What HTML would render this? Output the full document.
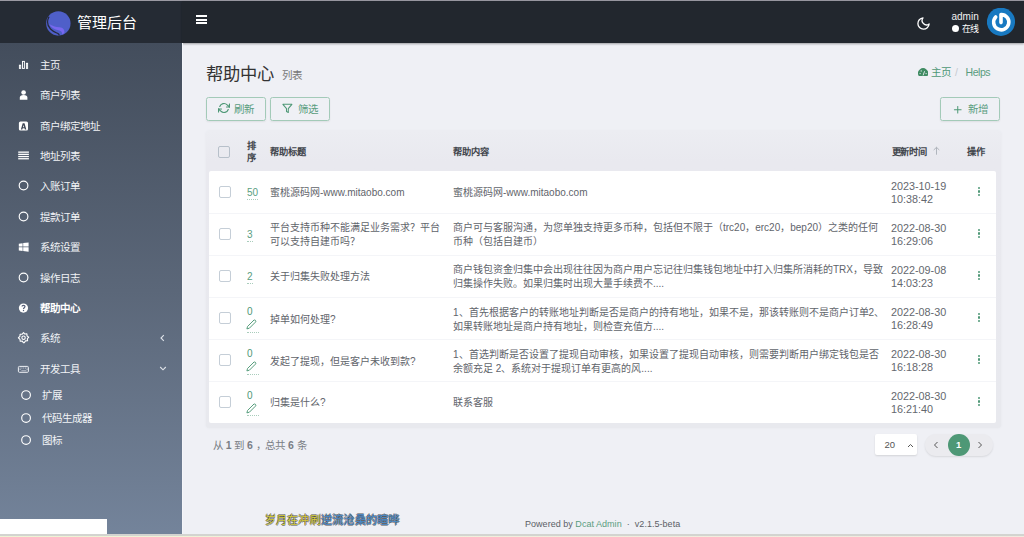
<!DOCTYPE html>
<html lang="zh-CN"><head><meta charset="utf-8">
<style>
*{box-sizing:border-box;margin:0;padding:0}
html,body{width:1024px;height:537px;overflow:hidden}
body{font-family:"Liberation Sans",sans-serif;font-size:10.5px;color:#414750;background:#eff0f5;position:relative}
.abs{position:absolute}
#topline{left:0;top:0;width:1024px;height:1px;background:#9b9aa3}
#header{left:182px;top:1px;width:842px;height:41.5px;background:#22272e;box-shadow:0 1px 2px rgba(0,0,0,.35)}
#brand{left:0;top:1px;width:182px;height:41.5px;background:#252b34}
#sidebar{left:0;top:42.5px;width:181.5px;height:495px;background:linear-gradient(180deg,#434d5c 0%,#5b6779 50%,#74849b 100%)}
#shadow{left:182px;top:42.5px;width:1.2px;height:492px;background:#f4f5f9}
.logo-text{left:77.3px;top:13.8px;font-size:15px;color:#fff;line-height:17px;letter-spacing:-.15px}
.menu{position:absolute;left:0;width:182px;height:20px;line-height:20px;color:#f1f3f6;font-size:10.5px}
.menu .t{position:absolute;left:40px;top:0}
.menu .ic{position:absolute;left:14px;top:0;width:20px;height:20px}
.sub .t{left:42px}
.h1{left:206.3px;top:63.3px;font-size:17.3px;color:#333;line-height:22px;letter-spacing:-.2px}
.h1s{left:282px;top:68px;font-size:10.5px;color:#777;line-height:14px;letter-spacing:-.3px}
.btn{position:absolute;height:24px;border:1px solid #a3cab8;border-radius:2.5px;color:#5a9d7f;font-size:10.5px;line-height:22px;box-shadow:0 1px 2px rgba(0,0,0,.07)}
.btn span{letter-spacing:-.4px}
.crumb{top:66px;line-height:12px;font-size:10.5px;color:#4e9876}
#thead{left:205.5px;top:130.5px;width:795px;height:297px;background:linear-gradient(180deg,#ecedf2 0,#e9e9ef 30px,#e8e9ee 100%);border-radius:3px;box-shadow:0 0 1.5px rgba(225,226,232,.9)}
#tbody{left:209px;top:171px;width:787px;height:252px;background:#fff;border-radius:2px}
.cb{position:absolute;width:12px;height:12px;border:1px solid #c5ced7;border-radius:2px;background:#fff}
.th{position:absolute;font-weight:bold;color:#41454c;font-size:9.25px;line-height:12.2px;letter-spacing:-.1px}
.td{position:absolute;line-height:14px;font-size:10px;color:#5f646b}
.date{font-size:10.8px;line-height:13.5px;color:#63676e}
.num{position:absolute;color:#5a9e80;font-size:10px;line-height:11px;padding-bottom:1px;border-bottom:1px dotted #a9cdbc}
.kebab{position:absolute;left:978px;width:3px;height:9px}
.kebab i{display:block;width:2.3px;height:2.3px;border-radius:50%;background:#4f9877;margin-bottom:1px}
</style></head><body>
<div id="topline" class="abs"></div>
<div id="brand" class="abs"></div>
<div id="header" class="abs"></div>
<div id="sidebar" class="abs"></div>
<div id="shadow" class="abs"></div>

<!-- logo -->
<svg class="abs" style="left:46px;top:10.5px" width="25" height="25" viewBox="0 0 25 25">
  <defs><clipPath id="lc"><circle cx="12.35" cy="12.45" r="12.2"/></clipPath></defs>
  <circle cx="12.35" cy="12.45" r="12.2" fill="#4f5fc9"/>
  <g clip-path="url(#lc)">
  <path d="M3.2 13 C6 15.2 9.5 15.8 13.5 16.3 C17 16.8 18.8 18.5 18.4 22 L16.2 23.5 C16.4 20.8 14.8 19.6 12.5 19.2 C8.5 18.4 5.2 16.8 3.2 13Z" fill="#7868ef"/>
  <path d="M3 5.6 C1 9.5 1.2 14.5 4.5 18 C7 20.6 10 21.6 12 22.6 C13.2 23.3 13.4 24.3 13 25.2" fill="none" stroke="#252a3c" stroke-width="1.25"/>
  </g>
</svg>
<div class="abs logo-text">管理后台</div>
<!-- hamburger -->
<div class="abs" style="left:196px;top:15px;width:11px;height:9px">
  <div style="height:2px;background:#fff;margin-bottom:1.5px"></div>
  <div style="height:2px;background:#fff;margin-bottom:1.5px"></div>
  <div style="height:2px;background:#fff"></div>
</div>
<!-- moon -->
<svg class="abs" style="left:916px;top:15.5px" width="15" height="15" viewBox="0 0 24 24" fill="none" stroke="#fff" stroke-width="2.1" stroke-linecap="round" stroke-linejoin="round"><path d="M21 12.79A9 9 0 1 1 11.21 3 7 7 0 0 0 21 12.79z"/></svg>
<div class="abs" style="left:951.5px;top:11px;font-size:10px;color:#f2f2f2;line-height:12px">admin</div>
<div class="abs" style="left:952.2px;top:25.2px;width:7.2px;height:7.2px;border-radius:50%;background:#fff"></div>
<div class="abs" style="left:961.8px;top:23.5px;font-size:9px;color:#fff;line-height:11px;letter-spacing:-.3px">在线</div>
<svg class="abs" style="left:987px;top:8.2px" width="28" height="28" viewBox="0 0 28 28">
  <circle cx="13.95" cy="13.8" r="14.1" fill="#1879c1"/>
  <path d="M8.7 9 A7.6 7.6 0 1 0 14 6.6 L14 14.6" fill="none" stroke="#fff" stroke-width="3.6" stroke-linecap="round" stroke-linejoin="round"/>
</svg>

<!-- sidebar menu -->
<div class="menu" style="top:54.7px"><svg class="ic" viewBox="0 0 20 20"><g fill="none" stroke="#fff" stroke-width=".95"><rect x="5.4" y="10.2" width="1.3" height="3.2"/><rect x="8.5" y="6.4" width="1.9" height="7"/><rect x="12.4" y="8.3" width="1.2" height="5.1"/></g></svg><span class="t">主页</span></div>
<div class="menu" style="top:85.10000000000001px"><svg class="ic" viewBox="0 0 20 20"><circle cx="9.6" cy="7.5" r="2.3" fill="#fff"/><path d="M5.8 14.7 L5.8 12.6 Q5.8 9.9 9.6 9.9 Q13.4 9.9 13.4 12.6 L13.4 14.7Z" fill="#fff"/></svg><span class="t">商户列表</span></div>
<div class="menu" style="top:115.5px"><svg class="ic" viewBox="0 0 20 20"><rect x="4.9" y="5.5" width="9.1" height="9" rx="1.6" fill="#fff"/><path d="M6.9 13.4 L8.7 7.3 L10.5 7.3 L12.3 13.4 L10.9 13.4 L9.6 9.0 L8.3 13.4Z M8.4 11.2 H10.8 V12.2 H8.4Z" fill="#3e4655"/></svg><span class="t">商户绑定地址</span></div>
<div class="menu" style="top:145.89999999999998px"><svg class="ic" viewBox="0 0 20 20"><g fill="#fff"><rect x="4.2" y="5.5" width="10.7" height="1.3"/><rect x="4.2" y="7.7" width="10.7" height="1.3"/><rect x="4.2" y="9.9" width="10.7" height="1.3"/><rect x="4.2" y="12.1" width="10.7" height="1.3"/></g></svg><span class="t">地址列表</span></div>
<div class="menu" style="top:176.29999999999998px"><svg class="ic" viewBox="0 0 20 20"><circle cx="9.55" cy="9.45" r="4.35" fill="none" stroke="#fff" stroke-width="1.15"/></svg><span class="t">入账订单</span></div>
<div class="menu" style="top:206.7px"><svg class="ic" viewBox="0 0 20 20"><circle cx="9.55" cy="9.45" r="4.35" fill="none" stroke="#fff" stroke-width="1.15"/></svg><span class="t">提款订单</span></div>
<div class="menu" style="top:237.1px"><svg class="ic" viewBox="0 0 20 20"><path d="M4.8 6.7 L8.6 6.2 L8.6 9.6 L4.8 9.6Z M9.2 6.1 L14.6 5.5 L14.6 9.6 L9.2 9.6Z M4.8 10.2 L8.6 10.2 L8.6 13.9 L4.8 13.5Z M9.2 10.2 L14.6 10.2 L14.6 14.7 L9.2 14Z" fill="#fff"/></svg><span class="t">系统设置</span></div>
<div class="menu" style="top:267.5px"><svg class="ic" viewBox="0 0 20 20"><circle cx="9.55" cy="9.45" r="4.35" fill="none" stroke="#fff" stroke-width="1.15"/></svg><span class="t">操作日志</span></div>
<div class="menu" style="top:297.9px;font-weight:bold;color:#fff"><svg class="ic" viewBox="0 0 20 20"><circle cx="9.45" cy="10.05" r="4.6" fill="#fff"/><path d="M8 8.6 C8 7 11 7 11 8.6 C11 9.8 9.5 9.8 9.5 11" stroke="#56607a" stroke-width="1.2" fill="none"/><circle cx="9.5" cy="12.5" r=".7" fill="#56607a"/></svg><span class="t">帮助中心</span></div>
<div class="menu" style="top:328.3px"><svg class="ic" viewBox="0 0 20 20"><circle cx="9.55" cy="9.75" r="1.7" fill="none" stroke="#fff" stroke-width="1.1"/><path d="M9.55 4.6 L10.8 6.05 L12.9 5.8 L13 7.9 L14.7 9.25 L13.3 10.6 L13.6 12.8 L11.5 12.9 L10.2 14.8 L9.55 14.8 L8.3 13.1 L6.2 13.3 L6 11.3 L4.4 9.75 L5.9 8.4 L6.1 6.2 L8.2 6.2Z" fill="none" stroke="#fff" stroke-width="1.1" stroke-linejoin="round"/></svg><span class="t">系统</span><svg class="abs" style="left:159px;top:6px" width="7" height="8" viewBox="0 0 7 8"><path d="M4.8 1.2 L2 4 L4.8 6.8" stroke="#dfe3ea" stroke-width="1.1" fill="none"/></svg></div>
<div class="menu" style="top:358.7px"><svg class="ic" viewBox="0 0 20 20"><rect x="4.4" y="7.4" width="10" height="5.9" rx="1" fill="none" stroke="#eef0f4" stroke-width="1"/><g fill="#c9ced8"><rect x="5.6" y="8.6" width="1" height=".9"/><rect x="7.4" y="8.6" width="1" height=".9"/><rect x="9.2" y="8.6" width="1" height=".9"/><rect x="11" y="8.6" width="1" height=".9"/><rect x="12.6" y="8.6" width="1" height=".9"/><rect x="5.6" y="10.1" width="1" height=".9"/><rect x="12.6" y="10.1" width="1" height=".9"/><rect x="7.4" y="11.4" width="5" height=".8"/></g></svg><span class="t">开发工具</span><svg class="abs" style="left:158.5px;top:6.5px" width="8" height="7" viewBox="0 0 8 7"><path d="M1.2 2 L4 4.8 L6.8 2" stroke="#dfe3ea" stroke-width="1.1" fill="none"/></svg></div>
<div class="menu sub" style="top:384.9px"><svg class="ic" viewBox="0 0 20 20"><circle cx="12.05" cy="10.05" r="4.35" fill="none" stroke="#fff" stroke-width="1.15"/></svg><span class="t">扩展</span></div>
<div class="menu sub" style="top:407.7px"><svg class="ic" viewBox="0 0 20 20"><circle cx="12.05" cy="10.05" r="4.35" fill="none" stroke="#fff" stroke-width="1.15"/></svg><span class="t">代码生成器</span></div>
<div class="menu sub" style="top:429.5px"><svg class="ic" viewBox="0 0 20 20"><circle cx="12.05" cy="10.05" r="4.35" fill="none" stroke="#fff" stroke-width="1.15"/></svg><span class="t">图标</span></div>
<div class="abs" style="left:0;top:519px;width:107px;height:16px;background:#fff"></div>

<!-- content header -->
<div class="abs h1">帮助中心</div>
<div class="abs h1s">列表</div>
<div class="btn" style="left:206px;top:97px;width:60px"><svg class="abs" style="left:10.6px;top:4.3px" width="12" height="12" viewBox="0 0 24 24" fill="none" stroke="#4e9876" stroke-width="2.4" stroke-linecap="round" stroke-linejoin="round"><polyline points="23 4 23 10 17 10"/><polyline points="1 20 1 14 7 14"/><path d="M3.51 9a9 9 0 0 1 14.85-3.36L23 10M1 14l4.64 4.36A9 9 0 0 0 20.49 15"/></svg><span class="abs" style="left:27px;top:0">刷新</span></div>
<div class="btn" style="left:270px;top:97px;width:59.5px"><svg class="abs" style="left:11.1px;top:4.65px" width="10.8" height="10.8" viewBox="0 0 24 24" fill="none" stroke="#4e9876" stroke-width="2.3" stroke-linecap="round" stroke-linejoin="round"><polygon points="22 3 2 3 10 12.46 10 19 14 21 14 12.46 22 3"/></svg><span class="abs" style="left:27px;top:0">筛选</span></div>
<div class="btn" style="left:940px;top:97px;width:59.5px"><svg class="abs" style="left:10.9px;top:5.55px" width="11.5" height="11.5" viewBox="0 0 24 24" fill="none" stroke="#4e9876" stroke-width="2.1" stroke-linecap="round"><line x1="12" y1="5" x2="12" y2="19"/><line x1="5" y1="12" x2="19" y2="12"/></svg><span class="abs" style="left:27px;top:0">新增</span></div>

<svg class="abs" style="left:918px;top:68px" width="10.2" height="8.2" viewBox="0 0 10.2 8.2"><path d="M0.75 8 A5.1 5.1 0 1 1 9.45 8 Z" fill="#3f8b62"/><path d="M5.1 7.4 L6.6 3.2" stroke="#eff0f5" stroke-width=".9"/><circle cx="2.1" cy="5.6" r=".65" fill="#eff0f5"/><circle cx="3.2" cy="2.9" r=".65" fill="#eff0f5"/><circle cx="8.1" cy="5.6" r=".65" fill="#eff0f5"/></svg>
<div class="abs crumb" style="left:931px;letter-spacing:-.3px">主页</div>
<div class="abs crumb" style="left:955px;color:#c6cad0">/</div>
<div class="abs crumb" style="left:965.5px;color:#5a9c7e;letter-spacing:-.45px">Helps</div>

<!-- table -->
<div id="thead" class="abs"></div>
<div id="tbody" class="abs"></div>
<div class="cb" style="left:218px;top:146px;background:transparent;border-color:#b7c0ca"></div>
<div class="th" style="left:246.5px;top:140px">排<br>序</div>
<div class="th" style="left:270px;top:145.8px">帮助标题</div>
<div class="th" style="left:453px;top:145.8px">帮助内容</div>
<div class="th" style="left:891.5px;top:145.8px">更新时间</div>
<svg class="abs" style="left:933px;top:146px" width="7" height="10" viewBox="0 0 7 10"><path d="M3.5 8.7 V1.3 M0.7 4 L3.5 1.3 L6.3 4" stroke="#a9afb7" stroke-width="0.9" fill="none"/></svg>
<div class="th" style="left:967px;top:145.8px">操作</div>

<div class="cb" style="left:219px;top:186.2px"></div>
<div class="num" style="left:247px;top:187.2px">50</div>
<div class="td" style="left:270px;top:186.39999999999998px">蜜桃源码网-www.mitaobo.com</div>
<div class="td" style="left:453px;top:186.39999999999998px">蜜桃源码网-www.mitaobo.com</div>
<div class="td date" style="left:891px;top:179.5px">2023-10-19<br>10:38:42</div>
<div class="kebab" style="top:187.0px"><i></i><i></i><i></i></div>
<div class="abs" style="left:209px;top:213.2px;width:787px;height:1px;background:#f4f5f8"></div>
<div class="cb" style="left:219px;top:228.2px"></div>
<div class="num" style="left:247px;top:229.2px">3</div>
<div class="td" style="left:270px;top:221.39999999999998px">平台支持币种不能满足业务需求？平台<br>可以支持自建币吗？</div>
<div class="td" style="left:453px;top:221.39999999999998px">商户可与客服沟通，为您单独支持更多币种，包括但不限于（trc20，erc20，bep20）之类的任何<br>币种（包括自建币）</div>
<div class="td date" style="left:891px;top:221.5px">2022-08-30<br>16:29:06</div>
<div class="kebab" style="top:229.0px"><i></i><i></i><i></i></div>
<div class="abs" style="left:209px;top:255.2px;width:787px;height:1px;background:#f4f5f8"></div>
<div class="cb" style="left:219px;top:270.2px"></div>
<div class="num" style="left:247px;top:271.2px">2</div>
<div class="td" style="left:270px;top:270.4px">关于归集失败处理方法</div>
<div class="td" style="left:453px;top:263.4px">商户钱包资金归集中会出现往往因为商户用户忘记往归集钱包地址中打入归集所消耗的TRX，导致<br>归集操作失败。如果归集时出现大量手续费不....</div>
<div class="td date" style="left:891px;top:263.5px">2022-09-08<br>14:03:23</div>
<div class="kebab" style="top:271.0px"><i></i><i></i><i></i></div>
<div class="abs" style="left:209px;top:297.3px;width:787px;height:1px;background:#f4f5f8"></div>
<div class="cb" style="left:219px;top:312.3px"></div>
<div class="abs" style="left:247px;top:306.1px;font-size:10px;color:#4e9876;line-height:12px">0</div>
<svg class="abs" style="left:246.3px;top:319.0px" width="10.8" height="10.8" viewBox="0 0 24 24" fill="none" stroke="#4e9876" stroke-width="2.1" stroke-linecap="round" stroke-linejoin="round"><path d="M17 3a2.828 2.828 0 1 1 4 4L7.5 20.5 2 22l1.5-5.5L17 3z"/></svg>
<div class="abs" style="left:247px;top:331.5px;width:12px;border-top:1px dotted #a9cdbc"></div>
<div class="td" style="left:270px;top:312.5px">掉单如何处理?</div>
<div class="td" style="left:453px;top:305.5px">1、首先根据客户的转账地址判断是否是商户的持有地址，如果不是，那该转账则不是商户订单2、<br>如果转账地址是商户持有地址，则检查充值方....</div>
<div class="td date" style="left:891px;top:305.6px">2022-08-30<br>16:28:49</div>
<div class="kebab" style="top:313.1px"><i></i><i></i><i></i></div>
<div class="abs" style="left:209px;top:339.3px;width:787px;height:1px;background:#f4f5f8"></div>
<div class="cb" style="left:219px;top:354.3px"></div>
<div class="abs" style="left:247px;top:348.1px;font-size:10px;color:#4e9876;line-height:12px">0</div>
<svg class="abs" style="left:246.3px;top:361.0px" width="10.8" height="10.8" viewBox="0 0 24 24" fill="none" stroke="#4e9876" stroke-width="2.1" stroke-linecap="round" stroke-linejoin="round"><path d="M17 3a2.828 2.828 0 1 1 4 4L7.5 20.5 2 22l1.5-5.5L17 3z"/></svg>
<div class="abs" style="left:247px;top:373.5px;width:12px;border-top:1px dotted #a9cdbc"></div>
<div class="td" style="left:270px;top:354.5px">发起了提现，但是客户未收到款?</div>
<div class="td" style="left:453px;top:347.5px">1、首选判断是否设置了提现自动审核，如果设置了提现自动审核，则需要判断用户绑定钱包是否<br>余额充足 2、系统对于提现订单有更高的风....</div>
<div class="td date" style="left:891px;top:347.6px">2022-08-30<br>16:18:28</div>
<div class="kebab" style="top:355.1px"><i></i><i></i><i></i></div>
<div class="abs" style="left:209px;top:381.2px;width:787px;height:1px;background:#f4f5f8"></div>
<div class="cb" style="left:219px;top:396.2px"></div>
<div class="abs" style="left:247px;top:390.0px;font-size:10px;color:#4e9876;line-height:12px">0</div>
<svg class="abs" style="left:246.3px;top:402.9px" width="10.8" height="10.8" viewBox="0 0 24 24" fill="none" stroke="#4e9876" stroke-width="2.1" stroke-linecap="round" stroke-linejoin="round"><path d="M17 3a2.828 2.828 0 1 1 4 4L7.5 20.5 2 22l1.5-5.5L17 3z"/></svg>
<div class="abs" style="left:247px;top:415.4px;width:12px;border-top:1px dotted #a9cdbc"></div>
<div class="td" style="left:270px;top:396.4px">归集是什么?</div>
<div class="td" style="left:453px;top:396.4px">联系客服</div>
<div class="td date" style="left:891px;top:389.5px">2022-08-30<br>16:21:40</div>
<div class="kebab" style="top:397.0px"><i></i><i></i><i></i></div>

<div class="abs" style="left:213px;top:438.3px;font-size:10.5px;color:#7a7e85;line-height:14px;letter-spacing:-.1px">从 <b>1</b> 到 <b>6</b> ，总共 <b>6</b> 条</div>

<div class="abs" style="left:875px;top:434px;width:42px;height:21px;background:#fff;border-radius:2px;box-shadow:0 1px 2px rgba(0,0,0,.12)"><span class="abs" style="left:9.5px;top:4.5px;font-size:9.5px;color:#555;line-height:12px">20</span><svg class="abs" style="left:32px;top:8.5px" width="7" height="5" viewBox="0 0 7 5"><path d="M1 4 L3.5 1.5 L6 4" stroke="#555" stroke-width="1" fill="none"/></svg></div>
<div class="abs" style="left:924.5px;top:434px;width:68px;height:22px;background:#ebebef;border-radius:11px;box-shadow:0 1px 2px rgba(0,0,0,.1)"></div>
<svg class="abs" style="left:933px;top:441px" width="6" height="8" viewBox="0 0 6 8"><path d="M4.5 1 L1.5 4 L4.5 7" stroke="#555" stroke-width="1" fill="none"/></svg>
<div class="abs" style="left:948px;top:434px;width:21.5px;height:22px;border-radius:50%;background:#4e9876;color:#fff;font-weight:bold;font-size:9.5px;line-height:22px;text-align:center">1</div>
<svg class="abs" style="left:977px;top:441px" width="6" height="8" viewBox="0 0 6 8"><path d="M1.5 1 L4.5 4 L1.5 7" stroke="#555" stroke-width="1" fill="none"/></svg>

<!-- footer -->
<div class="abs" style="left:264.5px;top:513px;font-size:11.3px;line-height:14px;letter-spacing:.25px;text-shadow:0.6px 0 0 rgba(40,40,40,.55),-0.6px 0 0 rgba(40,40,40,.55),0 0.6px 0 rgba(40,40,40,.55),0 -0.6px 0 rgba(40,40,40,.55)"><span style="color:#d9cf3c">岁月在冲刷</span><span style="color:#4a8ed0">逆流沧桑的暄哗</span></div>
<div class="abs" style="left:525px;top:517.8px;font-size:9px;color:#5c6066;line-height:12px;letter-spacing:.03px;white-space:pre">Powered by <span style="color:#5a9d7f">Dcat Admin</span>  ·  v2.1.5-beta</div>
<div class="abs" style="left:0;top:534.4px;width:1024px;height:1.2px;background:#d3d4d0"></div><div class="abs" style="left:0;top:535.6px;width:1024px;height:1.4px;background:linear-gradient(90deg,#eef4d4,#f1efdc 50%,#f2eadf)"></div>
</body></html>
